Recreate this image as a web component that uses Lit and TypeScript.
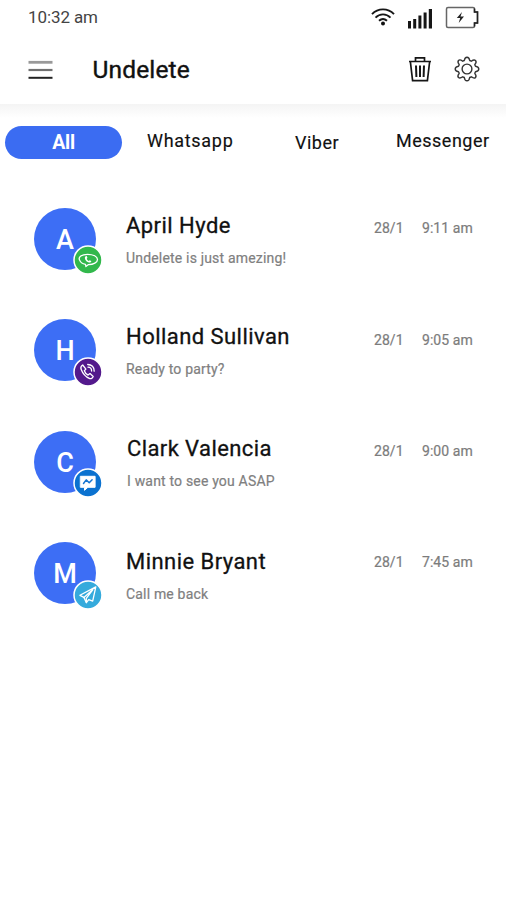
import { LitElement, html, svg, css } from "lit";
import { customElement, property } from "lit/decorators.js";

const glyphs: Record<string, unknown> = {
  whatsapp: svg`<path d="M6 14.2C4.6 11.200 8.200 8.600 14 8.600S24 10.800 24 13.800 20 18.900 15 18.900l-2.600 1.900-.4-2.200C9 18.200 6.800 16.600 6 14.200z"/><path d="M11.800 10.800c-1.200 1.200.2 5.200 3.600 6 1.400.3 2.600-.7 2.400-1.500l-1.600-.8-1 .7c-1-.4-1.600-1.200-1.900-2.200l.6-.9-.6-1.700z" fill="#fff" stroke="none"/>`,
  viber: svg`<path d="M9.200 7.300c-2 1.200-2.300 2.300-1.600 4.200 1.700 4.600 4.600 7.700 8.700 9.400 1.500.5 3-.9 3.400-2.200l-3.200-2.800-1.900 1.500c-2-.9-3.100-2.300-3.800-4.300l1.600-1.700z"/><path d="M14.200 6.800c4 0 6.600 2.600 6.500 6.700M14.500 9.500c2.300.1 3.600 1.500 3.600 3.800"/>`,
  messenger: svg`<path d="M7.200 7.600h14.400v11H14.400l-3.400 3v-3H7.200z" fill="#fff" stroke="#fff" stroke-width="1"/><path d="M10 14.800l2.700-3.600 3 2.800 2.900-3" stroke="#1675d1" stroke-width="1.500"/>`,
  telegram: svg`<path d="M22.300 6.200L6.400 14.600l4 2.100 9-7.800-6.600 8.800.1 4.200 2.300-3 4 1.500z"/><path d="M10.400 16.700l2.500 5.200"/>`,
};

const chats = [
  { name: "April Hyde", text: "Undelete is just amezing!", time: "9:11 am", app: "whatsapp" },
  { name: "Holland Sullivan", text: "Ready to party?", time: "9:05 am", app: "viber" },
  { name: "Clark Valencia", text: "I want to see you ASAP", time: "9:00 am", app: "messenger" },
  { name: "Minnie Bryant", text: "Call me back", time: "7:45 am", app: "telegram" },
];

@customElement("chat-row")
export class ChatRow extends LitElement {
  @property({ attribute: false }) chat = chats[0];

  static styles = css`
    :host { display: flex; height: 62px; }
    .avatar {
      position: relative; width: 62px; height: 62px; border-radius: 50%;
      background: #3d6ef5; color: #fff; flex: none;
      font-size: 27px; font-weight: 500; line-height: 64px; text-align: center;
    }
    .badge {
      position: absolute; left: 39px; top: 37.5px; width: 30px; height: 30px;
      display: block; fill: none; stroke: #fff; stroke-width: 1.3;
      stroke-linejoin: round; stroke-linecap: round;
    }
    .disc { stroke: #fff; stroke-width: 1.5; }
    .whatsapp .disc { fill: #32b84c; }
    .viber .disc { fill: #53198c; }
    .messenger .disc { fill: #0b72d0; }
    .telegram .disc { fill: #35aadc; }
    .body { flex: 1; margin-left: 30px; white-space: nowrap; }
    .name { font-size: 22px; line-height: 26px; letter-spacing: 0.45px; color: #111; -webkit-text-stroke: 0.3px #111; margin-top: 5px; }
    .text { font-size: 14px; line-height: 18px; letter-spacing: 0.18px; color: #808080; -webkit-text-stroke: 0.2px #808080; margin-top: 10px; }
    .messenger .body { margin-left: 31px; }
    .messenger .name { letter-spacing: 0.4px; }
    .telegram .name { margin-top: 7px; }
    .when { display: flex; font-size: 14px; line-height: 18px; color: #7c7c7c; -webkit-text-stroke: 0.2px #7c7c7c; letter-spacing: 0.05px; margin-top: 11px; }
    .viber .when { margin-top: 12px; }
    .date { width: 48px; }
    .time { width: 52px; white-space: nowrap; }
    .wrap { display: flex; flex: 1; }
  `;

  render() {
    const c = this.chat;
    return html`<div class="wrap ${c.app}">
      <div class="avatar">${c.name[0]}
        <svg class="badge" viewBox="0 0 30 30"><circle class="disc" cx="15" cy="15" r="14"/>
          <g transform="translate(0.500 0.700)">${glyphs[c.app]}</g></svg>
      </div>
      <div class="body"><div class="name">${c.name}</div><div class="text">${c.text}</div></div>
      <div class="when"><span class="date">28/1</span><span class="time">${c.time}</span></div>
    </div>`;
  }
}

@customElement("app-root")
export class AppRoot extends LitElement {
  static styles = css`
    :host { display: block; height: 900px; overflow: hidden; background: #fff; font-family: Roboto, "Liberation Sans", sans-serif; color: #111; }
    svg { display: block; flex: none; }
    .status { display: flex; height: 35px; padding: 0 26px 0 28px; align-items: center; }
    .clock { flex: 1; font-size: 17px; line-height: 35px; letter-spacing: -0.1px; color: #444; }
    .wifi { margin: 0 13px 1px -1px; }
    .signal { margin: 2px 13px 0 0; }
    .header { display: flex; height: 69px; padding: 0 26px 0 28px; align-items: center; }
    .title { flex: 1; margin-left: 39.5px; font-size: 24.5px; letter-spacing: 0.15px; -webkit-text-stroke: 0.4px #111; line-height: 70px; }
    .trash { margin: 0 22px 2px -1px; }
    .gear { margin-bottom: 2px; }
    .fade { height: 14px; background: linear-gradient(#f4f4f4, #fff); }
    .tabs { display: flex; margin-top: 8px; padding-left: 5px; height: 33px; font-size: 18px; line-height: 33px; white-space: nowrap; }
    .pill { width: 117px; border-radius: 17px; background: #3b6cf2; color: #fff; text-align: center; font-size: 19.5px; font-weight: 700; letter-spacing: -0.3px; line-height: 34px; }
    .tab { letter-spacing: 0.5px; line-height: 30px; -webkit-text-stroke: 0.15px #111; }
    .t1 { width: 148px; margin-left: 25px; letter-spacing: 0.7px; }
    .t2 { width: 101px; line-height: 34px; }
    .list { display: flex; flex-direction: column; gap: 49.5px; padding: 48.500px 32px 0 34px; }
  `;

  render() {
    return html`
      <div class="status">
        <span class="clock">10:32 am</span>
        <svg class="wifi" width="24" height="18" viewBox="0 0 24 18" fill="none" stroke="#161616" stroke-width="1.900"><path d="M1 6.200C7-.2 17-.2 23 6.200M4.500 9.600c4.200-4.300 10.800-4.300 15 0M8 12.800c2.400-2.200 5.600-2.200 8 0"/><circle cx="12" cy="15.500" r="2" fill="#111" stroke="none"/></svg>
        <svg class="signal" width="24" height="21" viewBox="0 0 24 21" fill="#161616"><path d="M0 13h3v7.500H0zM5.200 11h3v9.500h-3zM10.400 7.500h3v13h-3zM15.600 4.500h3v16h-3zM20.800 1H24v19.500h-3.200z"/></svg>
        <svg width="35" height="23" viewBox="0 0 35 23" fill="none" stroke="#666" stroke-width="1.500"><path d="M3 1.500h25q1.500 0 1.500 1.500v3h3v11h-3v3q0 1.500-1.500 1.500H3q-1.500 0-1.500-1.500V3Q1.500 1.500 3 1.500z"/><path d="M29.500 2.500V6h3v11h-3v3.500" stroke="#222"/><path d="M17 6l-5.200 6h3.400l-1.500 5 5.300-6.500h-3.500z" fill="#222" stroke="none"/></svg>
      </div>
      <div class="header">
        <svg width="25" height="20" viewBox="0 0 25 20"><path d="M0.500 2.300h24" stroke="#999" stroke-width="2.800"/><path d="M0.500 10h24" stroke="#707070" stroke-width="2.200"/><path d="M0.500 17.800h24" stroke="#222" stroke-width="2"/></svg>
        <span class="title">Undelete</span>
        <svg class="trash" width="24" height="26" viewBox="0 0 24 26" fill="none" stroke="#161616" stroke-width="1.700"><path d="M1 5.500h22M7.500 5V1.800h9V5M2.400 6l2.200 18.600h14.800L21.600 6" /><path d="M8 9.500l.4 11.500M12 9.500V21M16 9.500L15.600 21" stroke-width="2"/></svg>
        <svg class="gear" width="26" height="26" viewBox="0 0 26 26" fill="none" stroke="#333" stroke-width="1.400" stroke-linejoin="round"><circle cx="13" cy="13" r="4.900"/><path d="M10.300 4.500Q10.800 1.200 13 1.200T15.700 4.500L17.300 5.200Q20 3.200 21.500 4.500T20.800 8.700L21.500 10.300Q24.800 10.800 24.800 13T21.500 15.700L20.800 17.300Q22.800 20 21.500 21.500T17.300 20.800L15.700 21.500Q15.200 24.800 13 24.800T10.300 21.500L8.700 20.800Q6 22.800 4.500 21.500T5.200 17.300L4.500 15.700Q1.200 15.200 1.200 13T4.500 10.300L5.200 8.700Q3.200 6 4.500 4.500T8.700 5.200z"/></svg>
      </div>
      <div class="fade"></div>
      <div class="tabs">
        <div class="pill">All</div><div class="tab t1">Whatsapp</div><div class="tab t2">Viber</div><div class="tab">Messenger</div>
      </div>
      <div class="list">${chats.map((c) => html`<chat-row .chat=${c}></chat-row>`)}</div>
    `;
  }
}
